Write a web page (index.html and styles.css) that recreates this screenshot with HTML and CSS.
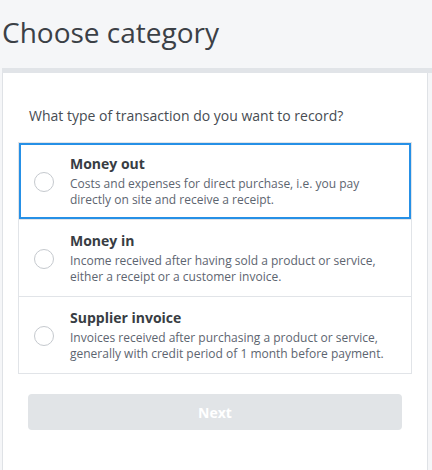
FILE: index.html
```html
<!DOCTYPE html>
<html>
<head>
<meta charset="utf-8">
<link rel="stylesheet" href="styles.css">
</head>
<body>
<header class="header">
  <h1 class="title">Choose category</h1>
</header>
<div class="panel">
  <div class="card">
    <p class="question">What type of transaction do you want to record?</p>
    <div class="options">
      <div class="option selected">
        <span class="radio"></span>
        <div class="option-text">
          <div class="option-title">Money out</div>
          <div class="option-desc">Costs and expenses for direct purchase, i.e. you pay directly on site and receive a receipt.</div>
        </div>
      </div>
      <div class="option">
        <span class="radio"></span>
        <div class="option-text">
          <div class="option-title">Money in</div>
          <div class="option-desc">Income received after having sold a product or service, either a receipt or a customer invoice.</div>
        </div>
      </div>
      <div class="option">
        <span class="radio"></span>
        <div class="option-text">
          <div class="option-title">Supplier invoice</div>
          <div class="option-desc">Invoices received after purchasing a product or service, generally with credit period of 1 month before payment.</div>
        </div>
      </div>
    </div>
    <div class="actions">
      <button class="next" disabled>Next</button>
    </div>
  </div>
</div>
</body>
</html>
```

FILE: styles.css
```css
* { box-sizing: border-box; }
html, body {
  margin: 0;
  padding: 0;
  background: #f5f6f8;
  font-family: "Open Sans", "Noto Sans", sans-serif;
  overflow: hidden;
  height: 470px;
}
.header {
  height: 68px;
  padding: 13px 0 0 2px;
}
.title {
  margin: 0;
  font-size: 28px;
  font-weight: 400;
  line-height: 38px;
  color: #3b4046;
}
.panel {
  margin-left: 2px;
  border-top: 5px solid #e1e4e8;
  height: 402px;
}
.card {
  width: 426px;
  height: 100%;
  background: #fff;
  border-left: 1px solid #dfe2e6;
  border-right: 1px solid #dfe2e6;
  padding: 0 15px;
}
.question {
  margin: 0;
  padding: 33px 0 0 11px;
  font-size: 14px;
  line-height: 20px;
  color: #474c52;
  height: 69px;
}
.options {
  border: 1px solid #e1e4e8;
}
.option {
  display: flex;
  align-items: center;
  height: 77px;
  padding: 0 17px 0 15px;
  border-top: 1px solid #e1e4e8;
}
.option:first-child {
  border-top: none;
  height: 76px;
}
.option.selected {
  box-shadow: inset 0 0 0 2px #2690e6;
}
.radio {
  flex: none;
  width: 20px;
  height: 20px;
  border: 1px solid #c5c9ce;
  border-radius: 50%;
  margin-right: 16px;
  margin-top: 2px;
}
.option-text {
  flex: 1;
}
.option-title {
  font-size: 14px;
  font-weight: 700;
  line-height: 20px;
  color: #383d43;
  margin-bottom: 2px;
}
.option-desc {
  font-size: 12px;
  line-height: 16px;
  color: #5d6570;
}
.actions {
  padding: 20px 10px 0 10px;
}
.next {
  display: block;
  width: 100%;
  height: 36px;
  border: none;
  border-radius: 4px;
  background: #e1e4e7;
  color: #fff;
  font-family: "Open Sans", "Noto Sans", sans-serif;
  font-size: 14px;
  font-weight: 700;
}
```
